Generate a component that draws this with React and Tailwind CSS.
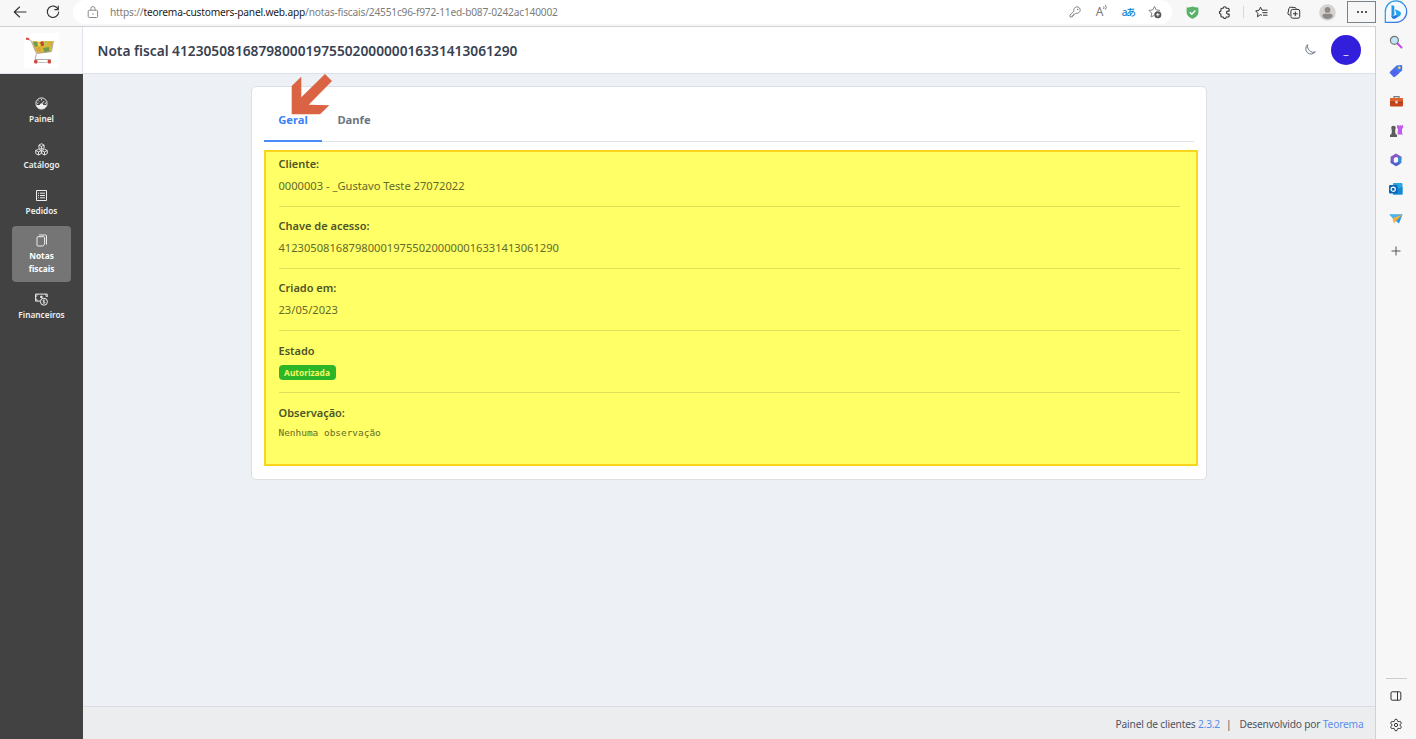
import React from "react";

function BackIcon() {
  return (
    <svg width="14" height="14" viewBox="0 0 14 14" fill="none" stroke="#333" strokeWidth="1.1" strokeLinecap="round" strokeLinejoin="round">
      <path d="M13 7H1.5M6.5 2L1.3 7l5.2 5" />
    </svg>
  );
}
function RefreshIcon() {
  return (
    <svg width="14" height="14" viewBox="0 0 14 14" fill="none" stroke="#333" strokeWidth="1.1" strokeLinecap="round" strokeLinejoin="round">
      <path d="M12.2 4.4A5.7 5.7 0 1 0 12.7 7M12.3 1v3.6H8.8" />
    </svg>
  );
}
function LockIcon() {
  return (
    <svg width="12" height="13" viewBox="0 0 12 13" fill="none" stroke="#888" strokeWidth="1">
      <rect x="1.2" y="4.2" width="9.4" height="7.3" rx="1.2" />
      <path d="M3.8 4.2V2.7a2.1 2.1 0 0 1 4.2 0v1.5" />
      <circle cx="5.9" cy="7.9" r=".7" fill="#777" stroke="none" />
    </svg>
  );
}
function KeyIcon() {
  return (
    <svg width="12" height="12" viewBox="0 0 12 12" fill="none" stroke="#777" strokeWidth=".9" strokeLinejoin="round">
      <path d="M5 5.2a3.2 3.2 0 1 1 2 1.9l-1 1H4.7v1.3H3.4v1.5H1V9z" />
      <circle cx="8.6" cy="3.4" r=".7" fill="#777" stroke="none" />
    </svg>
  );
}
function StarAddIcon() {
  return (
    <svg width="14" height="14" viewBox="0 0 14 14" fill="none" stroke="#777" strokeWidth=".9" strokeLinejoin="round">
      <path d="M6 10.5l-2.9 1.4.6-3.8L1 5.4l3.8-.5L6.5 1.400l1.700 3.500 3.800.5" />
      <circle cx="9.8" cy="9.7" r="3.5" fill="#555" stroke="none" />
      <path d="M9.8 7.9v3.6M8 9.7h3.6" stroke="#fff" />
    </svg>
  );
}
function ShieldIcon() {
  return (
    <svg width="13" height="13" viewBox="0 0 13 13">
      <path d="M6.5.4c2 .9 3.9 1 5.900 1v4.300c0 3.600-2.300 5.700-5.900 7C2.900 11.400.6 9.300.6 5.700V1.400c2 0 3.900-.1 5.900-1z" fill="#58b368" />
      <path d="M3.8 6.2l2 2 3.600-3.700" fill="none" stroke="#fff" strokeWidth="1.4" />
    </svg>
  );
}
function PuzzleIcon() {
  return (
    <svg width="13" height="13" viewBox="0 0 13 13" fill="none" stroke="#333" strokeWidth="1.1" strokeLinejoin="round">
      <path d="M3.900 2.200h1.300a1.500 1.500 0 0 1 3 0h1.900a1 1 0 0 1 1 1v1.900H10a1.500 1.500 0 0 0 0 3h1.100V10a1 1 0 0 1-1 1H8.200a1.500 1.500 0 0 1-3 0H3.900a1 1 0 0 1-1-1V8.100a1.500 1.500 0 1 1 0-3V3.200a1 1 0 0 1 1-1z" />
    </svg>
  );
}
function StarListIcon() {
  return (
    <svg width="13" height="12" viewBox="0 0 13 12" fill="none" stroke="#333" strokeWidth="1" strokeLinejoin="round">
      <path d="M7 9.300L5.300 8.700 2.500 10.800 2.900 7.400.7 4.900 3.900 4.400 5.500 1.200 7 4.200h5.500M7.300 6.700h5.200M8 9.200h4.500" />
    </svg>
  );
}
function CollectionsIcon() {
  return (
    <svg width="14" height="13" viewBox="0 0 14 13" fill="none" stroke="#333" strokeWidth="1">
      <path d="M3 9.200L1.900 8.800a1.500 1.500 0 0 1-.9-1.900L2 2.300a1.500 1.500 0 0 1 1.800-1.100l4 .3c.8 0 1.300.6 1.500 1.200" />
      <rect x="3.9" y="3.4" width="8.8" height="8.8" rx="1.7" />
      <path d="M8.300 5.500v4.600M6 7.800h4.600" />
    </svg>
  );
}
function ProfileIcon() {
  return (
    <svg width="17" height="17" viewBox="0 0 17 17">
      <circle cx="8.5" cy="8.5" r="8.3" fill="#d5d3d1" />
      <circle cx="8.5" cy="5.9" r="2.9" fill="#8d8986" />
      <path d="M3.300 12.300c0-1.700 1-2.500 2.400-2.500h5.600c1.400 0 2.400.8 2.400 2.500-1 1.800-3 2.600-5.200 2.600s-4.200-.8-5.200-2.600z" fill="#8d8986" />
    </svg>
  );
}

function BrowserBar() {
  return (
    <div className="flex h-[26px] shrink-0 items-start bg-[#f7f7f7]">
      <div className="flex h-6 w-[41px] items-center justify-center"><BackIcon /></div>
      <div className="flex h-6 w-[24px] items-center justify-center"><RefreshIcon /></div>
      <div className="ml-2 flex h-6 w-[1100px] items-center rounded-full bg-white pr-[4px] pl-[14px]">
        <LockIcon />
        <span className="ml-[11px] flex-1 pt-px text-[10.2px] tracking-[-0.2px] whitespace-nowrap text-[#7c7c7c]">
          https://<span className="text-[#222]">teorema-customers-panel.web.app</span>/notas-fiscais/24551c96-f972-11ed-b087-0242ac140002
        </span>
        <span className="flex w-[27px] justify-center"><KeyIcon /></span>
        <span className="flex w-[27px] items-start justify-center pl-px">
          <span className="text-[12px] leading-4 text-[#777]">A</span>
          <svg width="5" height="7" viewBox="0 0 5 7" fill="none" stroke="#666" strokeWidth=".8"><path d="M.5 2.5q1 1 0 2.5M2.3.8q2 2.3 0 4.9" /></svg>
        </span>
        <span className="flex w-[26px] justify-center font-['Noto_Sans','Noto_Sans_CJK_JP',sans-serif] text-[10px] font-medium tracking-[-1.5px] text-[#1683d8]">aあ</span>
        <span className="flex w-[27px] justify-center"><StarAddIcon /></span>
      </div>
      <div className="flex h-6 w-[40px] items-center justify-center"><ShieldIcon /></div>
      <div className="flex h-6 w-[24px] items-center justify-center"><PuzzleIcon /></div>
      <div className="flex h-6 w-[14px] items-center justify-center"><span className="h-3 w-px bg-[#d8d8d8]" /></div>
      <div className="flex h-6 w-[22px] items-center justify-center"><StarListIcon /></div>
      <div className="flex h-6 w-[43px] items-center justify-center"><CollectionsIcon /></div>
      <div className="flex h-6 w-[25px] items-center justify-center"><ProfileIcon /></div>
      <div className="mt-px ml-[7px] flex h-[22px] w-[29px] items-center justify-center gap-[2px] border border-[#7b8288]">
        <span className="size-[2px] rounded-full bg-[#222]" />
        <span className="size-[2px] rounded-full bg-[#222]" />
        <span className="size-[2px] rounded-full bg-[#222]" />
      </div>
    </div>
  );
}

function CartLogo() {
  return (
    <svg width="35" height="35" viewBox="0 0 35 35">
      <rect width="35" height="35" fill="#fff" />
      <path d="M8 8.500l4-.5 4 1 5-1 8 0-.5 5-1.500 6-13 1.500L10.500 17z" fill="#d8b63c" />
      <path d="M9 8.500l4 .5 1 4-3 1zM19 15l6-1 .5 4-5 1.500z" fill="#6f9c4a" />
      <path d="M16 9l3-1 1.500 4-3 1.500z" fill="#c9452f" />
      <path d="M12 15l4-1 1 4-3 1.500zM25 10l3-1-.5 4z" fill="#e0a03f" />
      <path d="M20 9l3 0-1 4-2-1z" fill="#b5cc62" />
      <path d="M14 10l2 0 0 3-2 0z" fill="#f0d24c" />
      <path d="M4 6l3 1.500 5.500 13 15-2L29.500 8M12.500 20.500L11 26.500h16" fill="none" stroke="#aaa3a0" strokeWidth=".9" />
      <path d="M2 5.500l3 .8" stroke="#e0473c" strokeWidth="2" />
      <rect x="10" y="26.8" width="3.6" height="3.6" rx="1.5" fill="#d0463e" />
      <rect x="23.500" y="26.8" width="3.6" height="3.6" rx="1.5" fill="#d0463e" />
      <path d="M14 29.500h9" stroke="#b5b5b5" strokeWidth=".8" />
    </svg>
  );
}

const iconProps = { width: 13, height: 13, viewBox: "0 0 13 13", fill: "none", stroke: "#eee", strokeWidth: 1, strokeLinejoin: "round" };

function GaugeIcon() {
  return (
    <svg {...iconProps}>
      <circle cx="6.500" cy="6.500" r="5.600" />
      <path d="M1.300 7.900h3.300a2 2 0 0 1 3.800 0h3.300A5.500 5.500 0 0 1 6.500 12a5.500 5.500 0 0 1-5.200-4.100z" fill="#eee" stroke="none" />
      <path d="M6.300 7.500l2.700-3.400M6.500 2v1.400M3.300 3.500l.9.900M2.100 6.200h1.300M9.700 6.200H11" />
    </svg>
  );
}
function BoxesIcon() {
  return (
    <svg {...iconProps} strokeWidth=".9">
      <path d="M6.500.7l2.600 1.400v2.800L6.500 6.300 3.900 4.900V2.100zM3.900 2.100l2.600 1.400 2.600-1.400M6.500 3.500v2.800" />
      <path d="M3.500 6.100l2.800 1.400v3L3.500 12 .7 10.500v-3zM.7 7.500l2.800 1.400 2.800-1.400M3.500 8.900V12" />
      <path d="M9.500 6.100l2.800 1.400v3L9.500 12l-2.800-1.500v-3zM6.700 7.500l2.800 1.400 2.800-1.400M9.500 8.900V12" />
    </svg>
  );
}
function OrdersIcon() {
  return (
    <svg {...iconProps}>
      <rect x="1.500" y="1.500" width="10" height="10" />
      <path d="M3 4.200h1M5 4.200h5M3 6.500h1M5 6.500h5M3 8.800h1M5 8.800h5" />
    </svg>
  );
}
function CopyIcon() {
  return (
    <svg {...iconProps}>
      <path d="M4 1h6.500a1 1 0 0 1 1 1v8.500" />
      <path d="M3 2.700h5.600a1 1 0 0 1 1 1v6.500L7.900 12H3a1 1 0 0 1-1-1V3.700a1 1 0 0 1 1-1z" />
    </svg>
  );
}
function MoneyIcon() {
  return (
    <svg {...iconProps}>
      <path d="M5 8.100H.6V1.100h11.600V4" />
      <path d="M.6 3.300h1.300V1.100M12.200 3.300h-1.300V1.100M.6 6h1.300v2" strokeWidth=".7" />
      <circle cx="6.400" cy="3.900" r=".9" fill="#eee" />
      <circle cx="8.900" cy="8.700" r="3.500" />
      <path d="M10 7.500c-.8-.6-2.200-.5-2.200.3 0 1 2.300.6 2.300 1.600 0 .9-1.600.9-2.400.3M8.900 6.500v4.400" strokeWidth=".7" />
    </svg>
  );
}

function NavItem({ icon, label, active }) {
  return (
    <a className={active
      ? "flex h-14 w-[59px] flex-col items-center rounded-[4px] bg-[#757575] pt-[8px] text-center text-[8.3px] leading-[13px] font-bold text-white"
      : "flex h-[46px] w-[59px] flex-col items-center pt-[8px] text-center text-[8.3px] leading-[13px] font-semibold text-[#f0f0f0]"}>
      {icon}
      <span className="mt-[2px]">{label}</span>
    </a>
  );
}

function Sidebar() {
  return (
    <aside className="flex w-[83px] shrink-0 flex-col bg-[#424242]">
      <div className="flex h-[47px] items-center justify-center border-r border-b border-[#dfe5ea] bg-[#fafafa]"><CartLogo /></div>
      <nav className="mt-[15px] flex flex-col items-center">
        <NavItem icon={<GaugeIcon />} label="Painel" />
        <NavItem icon={<BoxesIcon />} label="Catálogo" />
        <NavItem icon={<OrdersIcon />} label="Pedidos" />
        <div className="-mt-px"><NavItem icon={<CopyIcon />} label={<>Notas<br />fiscais</>} active /></div>
        <div className="mt-[3px]"><NavItem icon={<MoneyIcon />} label="Financeiros" /></div>
      </nav>
    </aside>
  );
}

function Field({ label, children, first, last }) {
  return (
    <div className={first ? "h-[55px] border-b border-[#dede5b] pt-[3px]" : last ? "h-[62px] pt-[11px]" : "h-[62px] border-b border-[#dede5b] pt-[10px]"}>
      <div className="h-[18px] text-[11px] leading-[18px] font-semibold text-[#4e5527]">{label}</div>
      <div className={last ? "mt-[2px] flex h-[19px] items-center text-[#636b2b]" : "mt-[4px] flex h-[19px] items-center text-[11.15px] text-[#636b2b]"}>{children}</div>
    </div>
  );
}

function InvoiceCard() {
  return (
    <section className="relative mt-3 ml-[168px] h-[393.5px] w-[956px] rounded-[5px] border border-[#dcdfe4] bg-white pl-3">
      <div className="flex h-[55px] w-[930px] border-b border-[#dee2e8] text-[11.2px] font-bold">
        <button className="h-[55px] w-[58px] border-b-2 border-[#4a8bfa] pt-[13px] text-[#3d83f6]">Geral</button>
        <button className="h-[55px] w-[64px] pt-[11px] text-[#6b7480]">Danfe</button>
      </div>
      <div className="mt-[8px] h-[316px] w-[934px] border-2 border-[#fbd51c] bg-[#ffff66] pr-[16px] pl-[12.5px]">
        <Field label="Cliente:" first>0000003 - _Gustavo Teste 27072022</Field>
        <Field label="Chave de acesso:">41230508168798000197550200000016331413061290</Field>
        <Field label="Criado em:">23/05/2023</Field>
        <Field label={<span className="inline-block pt-px">Estado</span>}>
          <span className="flex h-[15px] w-[57px] items-center justify-center rounded-[4px] bg-[#2bb527] pt-px text-[8.4px] font-bold text-[#f2fa63]">Autorizada</span>
        </Field>
        <Field label="Observação:" last>
          <span className="font-['DejaVu_Sans_Mono',monospace] text-[9.45px]">Nenhuma observação</span>
        </Field>
      </div>
      <svg className="absolute -top-[13px] left-[39px]" width="42" height="42" viewBox="291 74 42 42">
        <path d="M325 74l7 7-23.300 23.700 20.600.6-9.300 9H291.700V86l9.600-9.300v20.600z" fill="#d96342" />
      </svg>
    </section>
  );
}

function AppPage() {
  return (
    <div className="flex min-h-0 flex-1 border-t border-r border-[#cfd2d5]">
      <Sidebar />
      <div className="flex min-w-0 flex-1 flex-col bg-[#edf1f6]">
        <header className="flex h-[47px] shrink-0 items-center border-b border-[#dde1e7] bg-white pr-[14px] pl-[14.5px]">
          <h1 className="flex-1 pt-[2px] text-[13.72px] font-semibold whitespace-nowrap text-[#374151]">Nota fiscal 41230508168798000197550200000016331413061290</h1>
          <svg className="mr-[15px]" width="12" height="12" viewBox="0 0 12 12" fill="none" stroke="#667085" strokeWidth="1" strokeLinejoin="round">
            <path d="M3.600.7a5.300 5.300 0 1 0 7.700 7.200C7 9.500 2.700 5.500 3.600.7z" />
          </svg>
          <span className="flex size-[30px] items-center justify-center rounded-full bg-[#321fdb] text-[11px] text-white">_</span>
        </header>
        <main className="flex-1"><InvoiceCard /></main>
        <footer className="flex h-[33px] shrink-0 items-center justify-end border-t border-[#d8dce1] bg-[#ebedef] pt-[4px] pr-[11.5px] text-[10.2px] tracking-[-0.17px] text-[#4b5563]">
          <span>Painel de clientes <a className="text-[#5b8def]">2.3.2</a></span>
          <span className="mx-[6px]">|</span>
          <span className="ml-[2px]">Desenvolvido por <a className="text-[#5b8def]">Teorema</a></span>
        </footer>
      </div>
    </div>
  );
}

function RailItem({ children }) {
  return <div className="flex h-[29.5px] w-full shrink-0 items-center justify-center">{children}</div>;
}

function EdgeRail() {
  return (
    <aside className="flex w-10 shrink-0 flex-col items-center bg-[#f7f7f7]">
      <div className="flex h-[27px] items-start justify-center">
        <svg width="24" height="24" viewBox="0 0 24 24">
          <defs><linearGradient id="ring" x1="0" y1="0" x2="1" y2="1"><stop stopColor="#24a9e8" /><stop offset="1" stopColor="#3f6ae0" /></linearGradient></defs>
          <path d="M1.300 22.300V12A10.700 10.700 0 1 1 12 22.300z" fill="#f4faff" stroke="url(#ring)" strokeWidth="1.2" />
          <path d="M7.500 5l2.800 1v9l-2.800 2z" fill="#2196ea" />
          <path d="M11 9.300l4.500 2c2 1 2 3.500.3 4.600L11 18.500c-2 .8-3.500-.5-3.500-2l5-1.500z" fill="#22a5ec" />
          <path d="M7.500 15.500c.5 1.500 2.500 1.500 5-.7l1 2-2.500 1.700c-2 .8-3.500-.5-3.500-3z" fill="#2474da" />
        </svg>
      </div>
      <RailItem>
        <svg width="14" height="14" viewBox="0 0 14 14"><path d="M8.500 8.500l4 4" stroke="#c44be0" strokeWidth="2" strokeLinecap="round" /><circle cx="5.400" cy="5.300" r="4" fill="#c2e4f6" stroke="#72797e" strokeWidth="1.2" /></svg>
      </RailItem>
      <RailItem>
        <svg width="14" height="14" viewBox="0 0 14 14"><path d="M7.500 1.500l4.700-.5c.8 0 1 .4 1 1v4.500L6 12.800c-.6.6-1.200.5-1.700 0L1 9.300c-.5-.5-.4-1.100 0-1.600z" fill="#4878ef" /><path d="M1 8.500l4.300 4.500 4.700-3.800-4.500-4.500z" fill="#5a56e8" opacity=".6" /><circle cx="10.300" cy="3.700" r="1.300" fill="#ffd65a" /></svg>
      </RailItem>
      <RailItem>
        <svg className="mt-px" width="15" height="13" viewBox="0 0 15 13"><path d="M5 3.500V1.600h5v1.900" fill="none" stroke="#777" strokeWidth="1.2" /><rect x="1" y="3.200" width="13" height="8.300" rx="1" fill="#c8431c" /><path d="M1 4c0-.6.4-1 1-1h11c.6 0 1 .4 1 1v3H1z" fill="#e2602d" /><path d="M1 7h13" stroke="#84301a" strokeWidth=".8" /><rect x="6.300" y="5.800" width="2.400" height="2.600" fill="#ddd" /></svg>
      </RailItem>
      <RailItem>
        <svg className="mt-px" width="15" height="14" viewBox="0 0 15 14"><path d="M8 1h1.500v1h1V1h1.300v1h1V1H14v3l-1 1v4l1 1.500H8.500L9 5 8 4z" fill="#c35be9" /><circle cx="4.500" cy="4" r="2.300" fill="#5c5c5c" /><path d="M2.500 6h4l-.4 1.500.6 3H8V13H1v-2.500h1.300l.6-3z" fill="#5c5c5c" /></svg>
      </RailItem>
      <RailItem>
        <svg width="14" height="14" viewBox="0 0 14 14"><path d="M7 .6l5.400 3.100v3L8.500 4.500 7 4 4.800 5.200v5L1.600 8.900V3.700z" fill="#8657c8" /><path d="M12.400 3.700v6.200L7 13.200l-1.600-3L9 9V4.700z" fill="#398ccf" /><path d="M1.600 7.800l3.200 1.400L7 10.100l2.200-1 1.800 1.900-4 2.300-5.400-3.200z" fill="#555fcf" /><circle cx="7" cy="7" r="2.200" fill="#f7f7f7" /></svg>
      </RailItem>
      <RailItem>
        <svg width="14" height="12" viewBox="0 0 14 12"><rect x="4" width="9.500" height="11.500" rx="1" fill="#2aa5e4" /><path d="M4 7l9.500-3v7.500H4z" fill="#1687d3" /><rect x="0" y="2" width="8.500" height="8.500" rx="1" fill="#0867b7" /><circle cx="4.200" cy="6.200" r="2.100" fill="none" stroke="#fff" strokeWidth="1.2" /></svg>
      </RailItem>
      <RailItem>
        <svg width="14" height="12" viewBox="0 0 14 12"><path d="M.5 1.500h13L10 10.500 7 8z" fill="#2797e4" /><path d="M.5 1.500h13L4.500 6z" fill="#48b4ef" /><path d="M3.500 5.200l10-3.700-6 6-2.700 3z" fill="#f5ae36" /></svg>
      </RailItem>
      <div className="mt-[7px] flex h-5 items-center justify-center"><svg width="10" height="10" viewBox="0 0 10 10" stroke="#555" strokeWidth="1"><path d="M5 .5v9M.5 5h9" /></svg></div>
      <div className="mt-auto h-px w-[21px] bg-[#ccc]" />
      <div className="flex h-[33px] items-center justify-center">
        <svg width="12" height="10" viewBox="0 0 12 10" fill="none" stroke="#333"><rect x="1" y=".8" width="9.800" height="8.400" rx="1.200" /><path d="M7.500.8v8.400" /></svg>
      </div>
      <div className="flex h-[27px] items-center justify-center pb-[2px]">
        <svg width="14" height="14" viewBox="0 0 24 24" fill="none" stroke="#333" strokeWidth="1.7" strokeLinejoin="round">
          <path d="M9.671 4.136a2.340 2.340 0 0 1 4.659 0 2.340 2.340 0 0 0 3.319 1.915 2.340 2.340 0 0 1 2.330 4.033 2.340 2.340 0 0 0 0 3.831 2.340 2.340 0 0 1-2.330 4.033 2.340 2.340 0 0 0-3.319 1.915 2.340 2.340 0 0 1-4.659 0 2.340 2.340 0 0 0-3.320-1.915 2.340 2.340 0 0 1-2.330-4.033 2.340 2.340 0 0 0 0-3.831A2.340 2.340 0 0 1 6.350 6.051a2.340 2.340 0 0 0 3.319-1.915" />
          <circle cx="12" cy="12" r="2.800" />
        </svg>
      </div>
    </aside>
  );
}

export default function App() {
  return (
    <div className="flex h-[739px] w-[1416px] overflow-hidden font-['Noto_Sans','Open_Sans',sans-serif]">
      <div className="flex w-[1376px] shrink-0 flex-col">
        <BrowserBar />
        <AppPage />
      </div>
      <EdgeRail />
    </div>
  );
}
